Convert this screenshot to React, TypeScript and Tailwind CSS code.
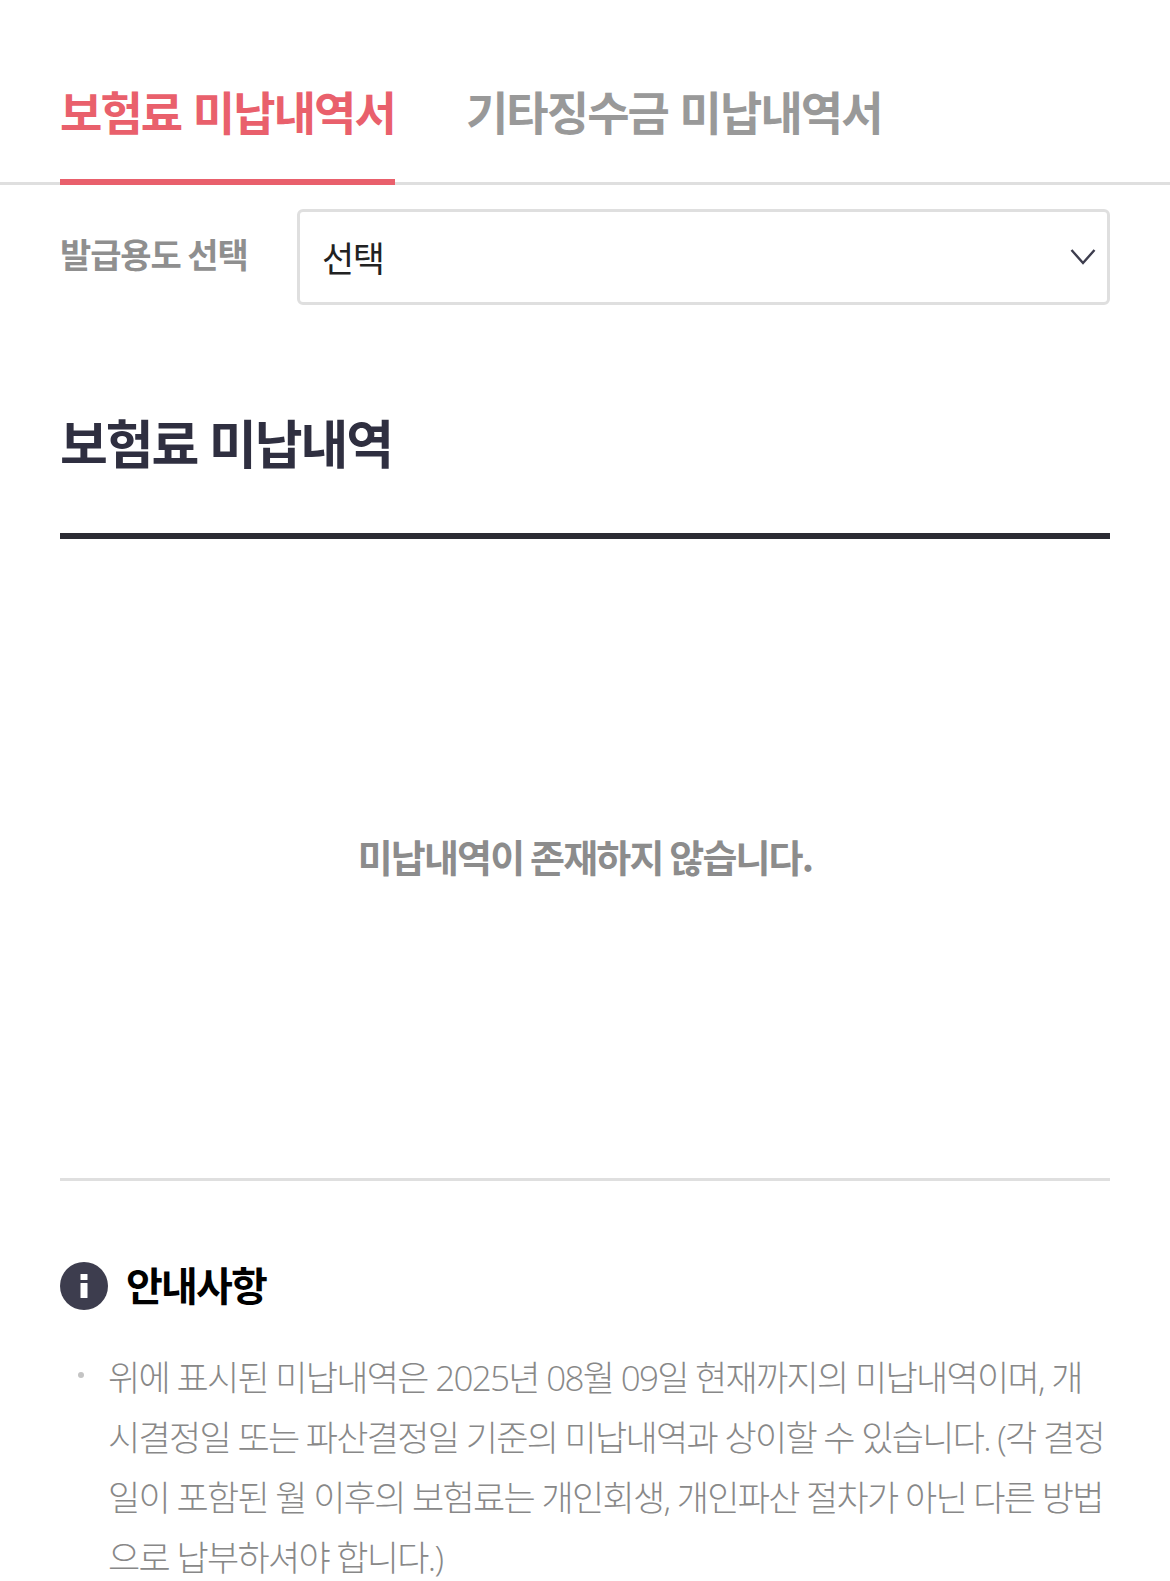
const font = "font-['Noto_Sans_CJK_KR','Noto_Sans',sans-serif]";

function InfoIcon() {
  return (
    <svg width="48" height="48" viewBox="0 0 48 48" className="shrink-0">
      <circle cx="24" cy="24" r="24" fill="#3d3d4e" />
      <rect x="20.5" y="12" width="7" height="6" rx="0.5" fill="#fff" />
      <rect x="20.5" y="21" width="7" height="15" rx="0.5" fill="#fff" />
    </svg>
  );
}

export default function App() {
  return (
    <div className={`${font} w-[1170px] h-[1581px] overflow-hidden bg-white`}>
      {/* Tabs */}
      <div className="flex gap-[71px] px-[60px] pt-[78px] h-[185px] border-b-[3px] border-[#dfdfdf]">
        <div className="h-[107px] border-b-[6px] border-[#e9606c] text-[46px] leading-[64px] font-bold tracking-[-1.9px] [word-spacing:3px] text-[#e9606c]">
          보험료 미납내역서
        </div>
        <div className="text-[46px] leading-[64px] font-bold tracking-[-1.9px] [word-spacing:3px] text-[#999999]">
          기타징수금 미납내역서
        </div>
      </div>

      {/* Select */}
      <div className="flex items-center px-[60px] pt-[24px]">
        <div className="w-[237px] text-[34px] font-bold tracking-[-1.1px] text-[#8f8f8f] pb-[8px]">발급용도 선택</div>
        <div className="flex-1 flex items-center justify-between h-[96px] border-[3px] border-[#dfdfdf] rounded-[6px] pl-[22px] pr-[11px]">
          <span className="text-[35px] tracking-[-1.5px] text-[#222222]">선택</span>
          <svg width="26" height="18" viewBox="0 0 26 18" fill="none">
            <path d="M1.5 2 L13 15 L24.5 2" stroke="#3d3d4e" strokeWidth="2.4" />
          </svg>
        </div>
      </div>

      {/* Section title */}
      <h2 className="px-[60px] mt-[97px] text-[52px] leading-[80px] font-bold tracking-[-2.1px] [word-spacing:2px] text-[#2f2f40]">보험료 미납내역</h2>

      {/* Empty state */}
      <div className="mx-[60px] mt-[51px] h-[648px] pb-[7px] flex items-center justify-center border-t-[6px] border-b-[3px] border-t-[#2b2b33] border-b-[#dfdfdf]">
        <span className="text-[38px] font-bold tracking-[-1.85px] text-[#8c8c8c]">미납내역이 존재하지 않습니다.</span>
      </div>

      {/* Notice */}
      <div className="px-[60px] pt-[80px]">
        <div className="flex items-center gap-[18px]">
          <InfoIcon />
          <span className="text-[40px] leading-[46px] pb-[4px] font-bold tracking-[-1.8px] text-black">안내사항</span>
        </div>
        <div className="flex mt-[37px]">
          <span className="w-[48px] shrink-0 pl-[18px] pt-[24px]">
            <span className="block w-[6px] h-[6px] rounded-full bg-[#c4c4c4]" />
          </span>
          <p className="whitespace-nowrap font-['Open_Sans','Noto_Sans_CJK_KR',sans-serif] text-[35px] leading-[60px] tracking-[-1.7px] text-[#888888] font-light">
            위에 표시된 미납내역은 2025년 08월 09일 현재까지의 미납내역이며, 개<br />
            시결정일 또는 파산결정일 기준의 미납내역과 상이할 수 있습니다. (각 결정<br />
            일이 포함된 월 이후의 보험료는 개인회생, 개인파산 절차가 아닌 다른 방법<br />
            으로 납부하셔야 합니다.)
          </p>
        </div>
      </div>
    </div>
  );
}
